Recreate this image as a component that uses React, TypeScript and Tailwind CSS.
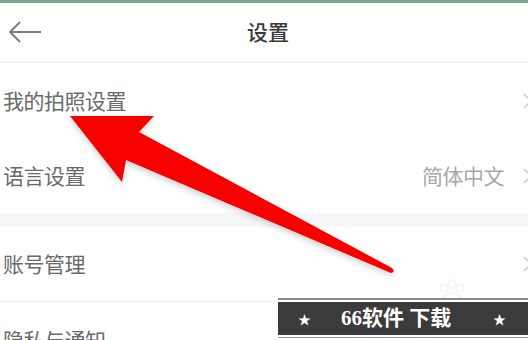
import React from 'react';

const font = { fontFamily: '"Noto Sans CJK SC", "Noto Sans", sans-serif' };

function Chevron() {
  return (
    <svg width="12" height="20" viewBox="0 0 12 20" className="shrink-0">
      <path d="M2 3 L9 10 L2 17" fill="none" stroke="#cfcfcf" strokeWidth="1.6" />
    </svg>
  );
}

function Row({ label, value, border }: { label: string; value?: string; border?: boolean }) {
  return (
    <div className={`h-[75px] flex items-center pl-[3px] ${border ? 'border-b border-[#ececec]' : ''}`}>
      <span className="text-[21px] text-[#6a6a6a] flex-1 tracking-[-0.5px]">{label}</span>
      {value && <span className="text-[21px] text-[#a8a8a8] mr-[18px] tracking-[-0.5px]">{value}</span>}
      <div className="w-[6px] overflow-visible flex justify-start">
        <Chevron />
      </div>
    </div>
  );
}

export default function App() {
  return (
    <div className="w-[528px] h-[340px] bg-white relative overflow-hidden" style={font}>
      <div className="h-[3px] bg-[#79a98a]" />
      <div className="h-[58px] flex items-center relative">
        <svg width="36" height="26" viewBox="0 0 36 26" className="ml-[7px]">
          <path d="M3 13 H34 M13 3 L3 13 L13 23" fill="none" stroke="#7a7a7a" strokeWidth="1.8" />
        </svg>
        <span className="absolute left-[247px] text-[21px] text-[#3a3a3a] font-medium">设置</span>
      </div>
      <div className="h-[2px] bg-[#f2f2f2]" />
      <Row label="我的拍照设置" />
      <Row label="语言设置" value="简体中文" />
      <div className="h-[14px] bg-[#f7f7f9]" />
      <Row label="账号管理" border />
      <Row label="隐私与通知" />

      {/* red arrow overlay */}
      <svg className="absolute left-0 top-0" width="528" height="340" viewBox="0 0 528 340">
        <defs>
          <filter id="sh" x="-10%" y="-10%" width="120%" height="130%">
            <feDropShadow dx="0" dy="3" stdDeviation="3" floodColor="#000" floodOpacity="0.18" />
          </filter>
        </defs>
        <path
          d="M70 116 L154 116 L139 132 L392 268 Q396 272 391 273 L126 160 L122 182 Z"
          fill="#f70000"
          filter="url(#sh)"
        />
      </svg>

      {/* faint paw watermark */}
      <svg className="absolute left-[430px] top-[278px]" width="44" height="24" viewBox="0 0 44 24">
        <g fill="none" stroke="#f0f0f0" strokeWidth="1.2">
          <circle cx="14" cy="10" r="4" />
          <circle cx="22" cy="6" r="4" />
          <circle cx="30" cy="10" r="4" />
          <ellipse cx="22" cy="20" rx="8" ry="5" />
        </g>
      </svg>

      {/* watermark banner */}
      <div className="absolute left-[278px] top-[298px] w-[250px] h-[42px] bg-white">
        <div className="h-[2px] bg-[#8a8a8a]" />
        <div className="h-[2px] bg-white" />
        <div className="h-[33px] bg-[#3b3b3b] flex items-center text-white">
          <span className="text-[13px] ml-[20px]">★</span>
          <span
            className="ml-[30px] text-[21px] font-bold"
            style={{ fontFamily: '"Liberation Serif", "Noto Sans CJK SC", serif' }}
          >
            66软件 下载
          </span>
          <span className="text-[13px] ml-auto mr-[22px]">★</span>
        </div>
        <div className="h-[2px] bg-white" />
        <div className="h-[1px] bg-[#9a9a9a]" />
      </div>
    </div>
  );
}
